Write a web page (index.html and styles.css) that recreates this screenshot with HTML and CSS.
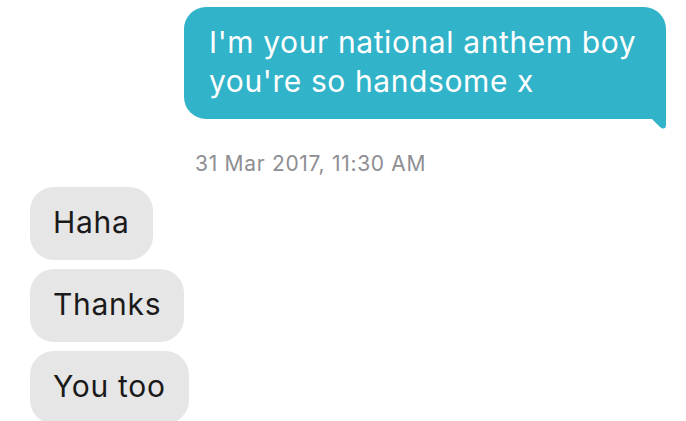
FILE: index.html
```html
<!DOCTYPE html>
<html>
<head>
<meta charset="utf-8">
<link rel="stylesheet" href="styles.css">
</head>
<body>
<div class="thread">
  <div class="row-out">
    <div class="bubble-out">
      <p class="msg">I'm your national anthem boy<br>you're so handsome x</p>
      <svg class="tail" width="20" height="19" viewBox="0 0 20 19"><path d="M0 0 H20 V15 Q20 19 16.5 18.5 Q15 18 13.5 16.5 L6 9 H0 Z" fill="#31b3c9"/></svg>
    </div>
  </div>
  <div class="stamp">31 Mar 2017, 11:30 AM</div>
  <div class="col-in">
    <div class="bubble-in">Haha</div>
    <div class="bubble-in">Thanks</div>
    <div class="bubble-in">You too</div>
  </div>
</div>
</body>
</html>
```
FILE: styles.css
```css
html, body {
  margin: 0;
  padding: 0;
  background: #ffffff;
}
body {
  width: 686px;
  height: 421px;
  overflow: hidden;
  font-family: Inter, "Liberation Sans", Arial, sans-serif;
}
.thread {
  display: flex;
  flex-direction: column;
  padding-top: 7px;
}
.row-out {
  display: flex;
  justify-content: flex-end;
  padding-right: 20px;
}
.bubble-out {
  position: relative;
  background: #31b3c9;
  color: #ffffff;
  width: 482px;
  height: 112px;
  box-sizing: border-box;
  padding: 16px 10px 0 25px;
  border-radius: 22px 22px 0 22px;
}
.msg {
  margin: 0;
  font-size: 30px;
  line-height: 39px;
  letter-spacing: 0.6px;
  white-space: nowrap;
}
.tail {
  position: absolute;
  right: 0;
  bottom: -10px;
  display: block;
}
.stamp {
  margin-top: 33px;
  padding-left: 195px;
  font-size: 21px;
  line-height: 24px;
  letter-spacing: 0.7px;
  color: #8e8e93;
}
.col-in {
  display: flex;
  flex-direction: column;
  align-items: flex-start;
  gap: 9px;
  padding-left: 30px;
  margin-top: 11px;
}
.bubble-in {
  background: #e6e6e7;
  color: #1a1a1a;
  font-size: 30px;
  line-height: 37px;
  letter-spacing: 0.7px;
  height: 73px;
  box-sizing: border-box;
  padding: 17px 23px;
  border-radius: 24px;
}
```
